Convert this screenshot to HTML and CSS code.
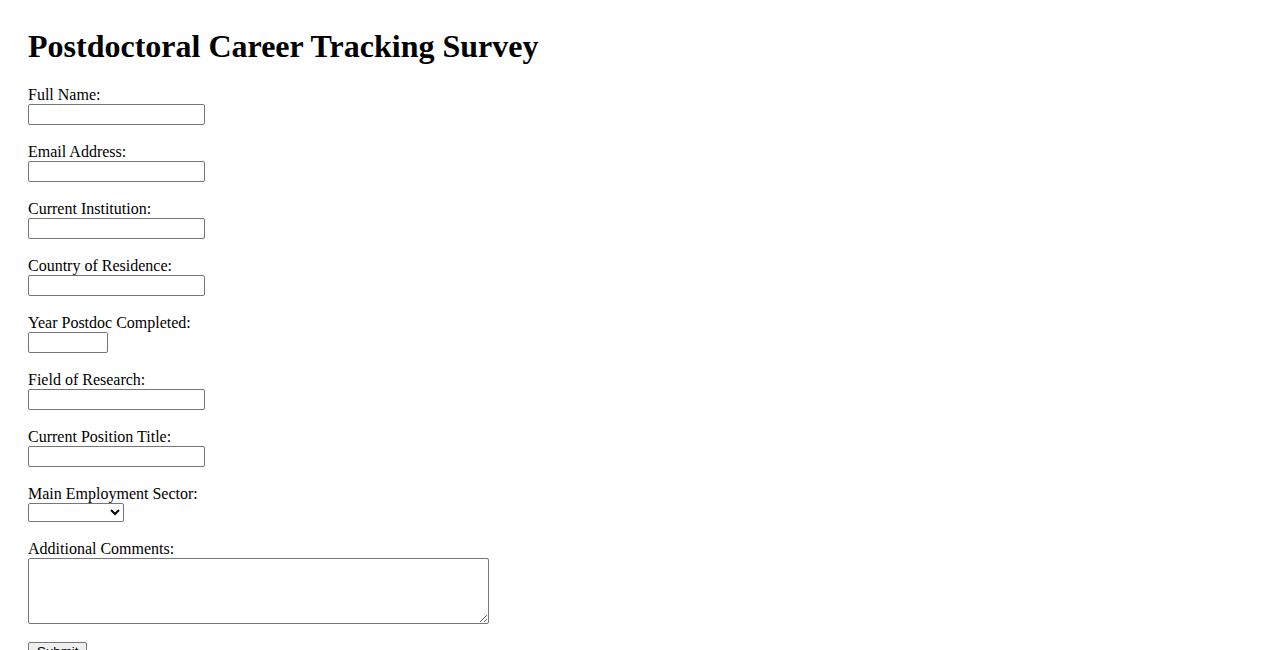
FILE: index.html
```html
<!DOCTYPE html>
<html lang="en">
<head>
  <meta charset="UTF-8">
  <title>Postdoctoral Career Tracking Survey</title>
  <link rel="stylesheet" href="styles.css">
</head>
<body>
  <h1 class="page-title">Postdoctoral Career Tracking Survey</h1>

  <form class="survey">
    <div class="field">
      <label for="name">Full Name:</label>
      <input type="text" id="name" class="text-input">
    </div>
    <div class="field">
      <label for="email">Email Address:</label>
      <input type="email" id="email" class="text-input">
    </div>
    <div class="field">
      <label for="institution">Current Institution:</label>
      <input type="text" id="institution" class="text-input">
    </div>
    <div class="field">
      <label for="country">Country of Residence:</label>
      <input type="text" id="country" class="text-input">
    </div>
    <div class="field">
      <label for="year">Year Postdoc Completed:</label>
      <input type="number" id="year" class="text-input year-input" min="1950" max="2100">
    </div>
    <div class="field">
      <label for="field">Field of Research:</label>
      <input type="text" id="field" class="text-input">
    </div>
    <div class="field">
      <label for="position">Current Position Title:</label>
      <input type="text" id="position" class="text-input">
    </div>
    <div class="field">
      <label for="sector">Main Employment Sector:</label>
      <select id="sector" class="sector-select">
        <option value=""></option>
        <option value="academia">Academia</option>
        <option value="industry">Industry</option>
        <option value="government">Government</option>
        <option value="nonprofit">Non-profit</option>
        <option value="other">Other</option>
      </select>
    </div>
    <div class="field">
      <label for="comments">Additional Comments:</label>
      <textarea id="comments" class="comments"></textarea>
    </div>
    <button type="submit" class="submit-btn">Submit</button>
  </form>
</body>
</html>
```

FILE: styles.css
```css
* {
  box-sizing: border-box;
}

html, body {
  margin: 0;
  padding: 0;
  background-color: #fff;
  color: #000;
}

body {
  padding: 28px;
  font-family: 'Liberation Serif', 'Times New Roman', serif;
  font-size: 16px;
}

.page-title {
  font-size: 32px;
  font-weight: bold;
  line-height: 37px;
  margin: 0 0 21px 0;
}

.survey {
  display: flex;
  flex-direction: column;
  align-items: flex-start;
}

.field {
  display: flex;
  flex-direction: column;
  align-items: flex-start;
  margin-bottom: 18px;
}

.field label {
  display: block;
  line-height: 18px;
}

.text-input {
  width: 177px;
  height: 21px;
  margin: 0;
  padding: 1px 2px;
  border: 1px solid #767676;
  border-radius: 2px;
  font-family: 'Liberation Sans', Arial, sans-serif;
  font-size: 13.33px;
}

.year-input {
  width: 80px;
}

.sector-select {
  width: 96px;
  height: 19px;
  margin: 0;
  border: 1px solid #767676;
  border-radius: 2px;
  font-family: 'Liberation Sans', Arial, sans-serif;
  font-size: 13.33px;
  background-color: #fff;
}

.comments {
  width: 461px;
  height: 66px;
  margin: 0;
  border: 1px solid #767676;
  border-radius: 2px;
  font-family: 'Liberation Mono', monospace;
  font-size: 13.33px;
}

.submit-btn {
  margin: 0;
  padding: 1px 8px;
  font-family: 'Liberation Sans', Arial, sans-serif;
  font-size: 13.33px;
  border: 1px solid #767676;
  border-radius: 2px;
  background-color: #efefef;
}
```
